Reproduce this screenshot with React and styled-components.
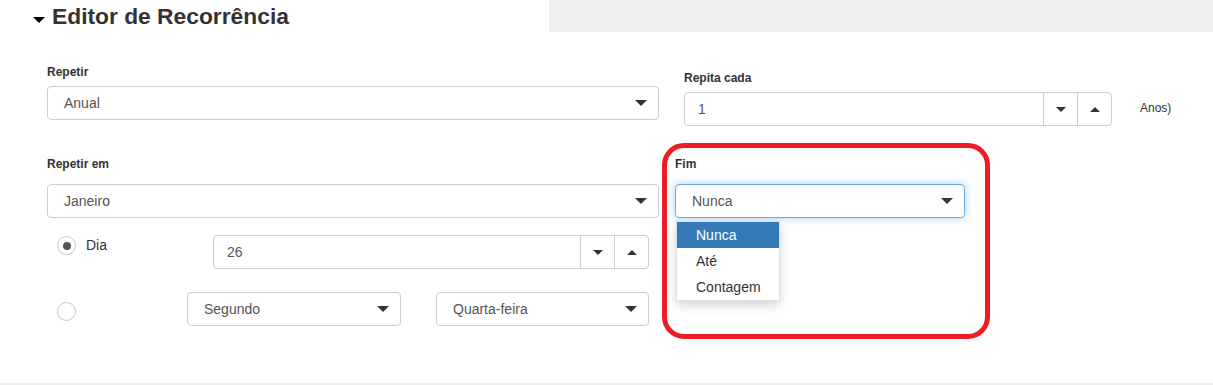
import styled, { createGlobalStyle } from "styled-components"

const GlobalStyle = createGlobalStyle`
    body {
        margin: 0;
        background: #fff;
        color: #333;
        font-family: "Liberation Sans", Arial, sans-serif;
    }
`

const Panel = styled.div`
    height: 383px;
    border-bottom: 2px solid #eee;
`

const Header = styled.div`
    display: flex;
    height: 32px;
`

const TitleArea = styled.div`
    display: flex;
    align-items: center;
    box-sizing: border-box;
    width: 549px;
    padding-left: 33px;
`

const Title = styled.h2`
    margin: 0 0 0 7px;
    font-size: 22.8px;
    font-weight: bold;
    line-height: 32px;
    color: #333;
`

const HeaderFill = styled.div`
    flex: 1;
    background: #f0f0f0;
`

const Triangle = styled.span`
    display: block;
    flex-shrink: 0;
    width: 0;
    height: 0;
    margin-top: ${p => p.$mt || 0}px;
    border-left: ${p => p.$w / 2}px solid transparent;
    border-right: ${p => p.$w / 2}px solid transparent;
    ${p => p.$up
        ? `border-bottom: ${p.$h}px solid ${p.$color || "#333"};`
        : `border-top: ${p.$h}px solid ${p.$color || "#333"};`}
`

const Form = styled.div`
    padding: 32px 0 0 47px;
`

const Row = styled.div`
    display: flex;
    align-items: flex-start;
    margin-top: ${p => p.$mt || 0}px;
`

const Field = styled.div`
    width: ${p => p.$w}px;
    margin-left: ${p => p.$ml || 0}px;
    padding-top: ${p => p.$pt || 0}px;
`

const Label = styled.div`
    margin-bottom: ${p => p.$gap}px;
    font-size: 12px;
    font-weight: bold;
    line-height: 17px;
    color: #333;
`

const SelectBox = styled.div`
    position: relative;
    display: flex;
    align-items: center;
    justify-content: space-between;
    box-sizing: border-box;
    width: ${p => (p.$w ? `${p.$w}px` : "100%")};
    height: 34px;
    margin-left: ${p => (p.$ml === "auto" ? "auto" : `${p.$ml || 0}px`)};
    padding: 0 11px 0 16px;
    border: 1px solid ${p => (p.$focus ? "#66afe9" : "#ccc")};
    border-radius: 4px;
    background: #fff;
    font-size: 14px;
    color: #555;
    box-shadow: ${p => (p.$focus
        ? "inset 0 1px 1px rgba(0,0,0,.075), 0 0 8px rgba(102,175,233,.6)"
        : "none")};
`

const Spinner = styled.div`
    display: flex;
    box-sizing: border-box;
    width: ${p => p.$w}px;
    height: 34px;
    margin-left: ${p => (p.$ml === "auto" ? "auto" : `${p.$ml || 0}px`)};
    border: 1px solid #ccc;
    border-radius: 4px;
`

const SpinValue = styled.div`
    display: flex;
    flex: 1;
    align-items: center;
    padding-left: 13px;
    font-size: 14px;
    color: #555;
`

const SpinButton = styled.div`
    display: flex;
    align-items: center;
    justify-content: center;
    width: 33px;
    border-left: 1px solid #ccc;
`

const Unit = styled.div`
    margin: 36px 0 0 28px;
    font-size: 12px;
    line-height: 17px;
    color: #333;
`

const Highlight = styled.div`
    box-sizing: border-box;
    width: 328px;
    height: 196px;
    margin-left: 3px;
    padding: 8px 20px 0 8px;
    border: 5px solid #ed1c24;
    border-radius: 22px;
`

const OptionRow = styled.div`
    display: flex;
    align-items: flex-start;
    box-sizing: border-box;
    width: 602px;
    margin-top: ${p => p.$mt}px;
    padding-left: 10px;
`

const Radio = styled.span`
    display: flex;
    flex-shrink: 0;
    align-items: center;
    justify-content: center;
    box-sizing: border-box;
    width: 19px;
    height: 19px;
    margin-top: ${p => p.$mt}px;
    border: 1px solid #c6c6c6;
    border-radius: 50%;
    background: #fff;

    &::after {
        content: "";
        display: ${p => (p.$checked ? "block" : "none")};
        width: 8px;
        height: 8px;
        border-radius: 50%;
        background: #555;
    }
`

const OptionLabel = styled.span`
    margin: 2px 0 0 10px;
    font-size: 14px;
    line-height: 17px;
    color: #333;
`

const Menu = styled.ul`
    position: absolute;
    top: calc(100% + 4px);
    left: 0;
    z-index: 2;
    box-sizing: border-box;
    width: 104px;
    margin: 0;
    padding: 0;
    list-style: none;
    background: #fff;
    border: 1px solid rgba(0, 0, 0, 0.12);
    box-shadow: 0 4px 10px rgba(0, 0, 0, 0.18);
`

const MenuItem = styled.li`
    height: 26px;
    padding-left: 19px;
    font-size: 14px;
    line-height: 26px;
    color: ${p => (p.$active ? "#fff" : "#333")};
    background: ${p => (p.$active ? "#337ab7" : "transparent")};
`

const SelectArrow = () => <Triangle $w={12} $h={6} />

const Select = ({ value, w, ml, focus, children }) => (
    <SelectBox $w={w} $ml={ml} $focus={focus}>
        <span>{value}</span>
        <SelectArrow />
        {children}
    </SelectBox>
)

const NumberInput = ({ value, w, ml }) => (
    <Spinner $w={w} $ml={ml}>
        <SpinValue>{value}</SpinValue>
        <SpinButton><Triangle $w={10} $h={5} /></SpinButton>
        <SpinButton><Triangle $w={10} $h={5} $up /></SpinButton>
    </Spinner>
)

const endOptions = ["Nunca", "Até", "Contagem"]

const App = () => {
    return (
        <Panel>
            <GlobalStyle />
            <Header>
                <TitleArea>
                    <Triangle $w={12} $h={6} $mt={8} $color="#000" />
                    <Title>Editor de Recorrência</Title>
                </TitleArea>
                <HeaderFill />
            </Header>

            <Form>
                <Row>
                    <Field $w={612}>
                        <Label $gap={5}>Repetir</Label>
                        <Select value="Anual" />
                    </Field>
                    <Field $w={428} $ml={25} $pt={6}>
                        <Label $gap={5}>Repita cada</Label>
                        <NumberInput value="1" w={428} />
                    </Field>
                    <Unit>Anos)</Unit>
                </Row>

                <Row $mt={17}>
                    <Field $w={612} $pt={13}>
                        <Label $gap={11}>Repetir em</Label>
                        <Select value="Janeiro" />

                        <OptionRow $mt={17}>
                            <Radio $checked $mt={1} />
                            <OptionLabel>Dia</OptionLabel>
                            <NumberInput value="26" w={436} ml="auto" />
                        </OptionRow>

                        <OptionRow $mt={23}>
                            <Radio $mt={10} />
                            <Select value="Segundo" w={214} ml="auto" />
                            <Select value="Quarta-feira" w={213} ml={35} />
                        </OptionRow>
                    </Field>

                    <Highlight>
                        <Label $gap={11}>Fim</Label>
                        <Select value="Nunca" focus>
                            <Menu>
                                {endOptions.map((opt, i) => (
                                    <MenuItem key={opt} $active={i === 0}>{opt}</MenuItem>
                                ))}
                            </Menu>
                        </Select>
                    </Highlight>
                </Row>
            </Form>
        </Panel>
    )
}

export default App
